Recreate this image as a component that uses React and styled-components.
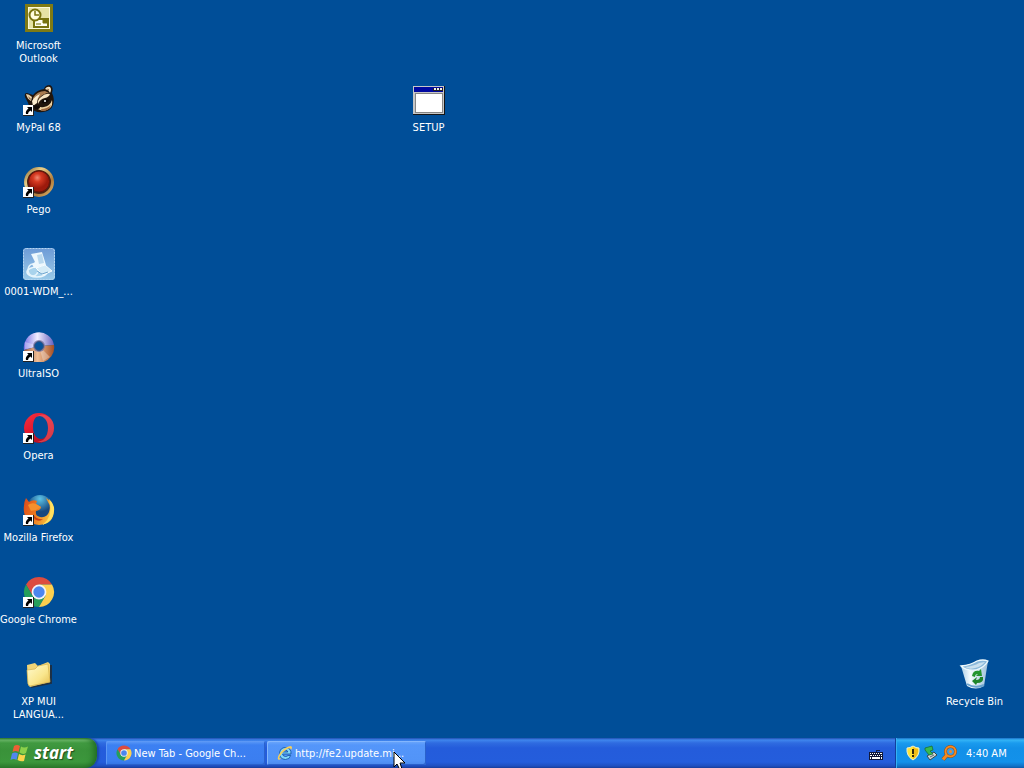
import React from 'react';
import styled, { createGlobalStyle } from 'styled-components';

const Global = createGlobalStyle`
  *, *::before, *::after { box-sizing: border-box; }
  html, body, #root { height: 100%; }
  body {
    margin: 0;
    overflow: hidden;
    background: #004e98;
    font-family: "DejaVu Sans Condensed", "DejaVu Sans", sans-serif;
    font-size: 11px;
    line-height: 13px;
    color: #fff;
  }
  button { font: inherit; color: inherit; border: 0; padding: 0; margin: 0; background: none; }
`;

const Screen = styled.div`
  height: 100%;
  display: flex;
  flex-direction: column;
`;

const Desktop = styled.main`
  position: relative;
  flex: 1;
  min-height: 0;
`;

const IconColumn = styled.div`
  display: grid;
  grid-auto-rows: 82px;
  width: 77px;
  padding-top: 2px;
`;

const Shortcut = styled.button`
  display: flex;
  flex-direction: column;
  align-items: center;
  align-self: start;
  width: 77px;
  white-space: nowrap;
`;

const Placed = styled.div`
  position: absolute;
  left: ${(p) => p.$left || 'auto'};
  right: ${(p) => p.$right || 'auto'};
  top: ${(p) => p.$top || 'auto'};
  bottom: ${(p) => p.$bottom || 'auto'};
`;

const IconBox = styled.span`
  position: relative;
  width: 32px;
  height: 32px;
  margin-bottom: 5px;
  svg { display: block; }
`;

const ArrowBadge = styled.svg`
  position: absolute;
  left: 0;
  bottom: 0;
`;

const Label = styled.span`
  text-align: center;
`;

const Taskbar = styled.footer`
  display: flex;
  height: 30px;
  flex: none;
  background: linear-gradient(#1f4fb0 0, #3f86ee 2px, #2f6be0 5px, #245cdb 10px, #245ddc 24px, #1f4fc0 28px, #173c99 30px);
`;

const StartButton = styled.button`
  display: flex;
  align-items: center;
  gap: 4px;
  width: 97px;
  padding: 0 0 1px 10px;
  border-radius: 0 10px 12px 0;
  background: linear-gradient(#2b7a2d 0, #6cb86a 2px, #419a41 5px, #3a923a 12px, #3c973c 24px, #2c7a2c 30px);
  box-shadow: inset -5px 0 6px -2px #1f6a22, 2px 0 2px #1c47a8;
  font-family: "Open Sans", "Noto Sans", sans-serif;
  font-size: 17px;
  line-height: 24px;
  font-weight: 700;
  font-style: italic;
  text-shadow: 1px 1px 1px #1d4a1d;
`;

const Tasks = styled.div`
  display: flex;
  flex: 1;
  min-width: 0;
  gap: 2px;
  padding: 3px 0 3px 9px;
`;

const Task = styled.button`
  display: flex;
  align-items: center;
  gap: 2px;
  width: 159px;
  padding: 0 10px;
  border-radius: 2px;
  white-space: nowrap;
  background: ${(p) => (p.$hover
    ? 'linear-gradient(#6fa9fb, #5496fa 4px, #5294f8 20px, #4a88ec)'
    : 'linear-gradient(#5f9cf8, #3c80f2 4px, #3b7ef0 20px, #3373e2)')};
  box-shadow: inset 1px 1px 0 ${(p) => (p.$hover ? '#83b6fd' : '#5c98f5')}, inset -1px -1px 0 #2a62cc;
  svg { flex: none; }
`;

const LanguageBar = styled.button`
  display: flex;
  align-items: center;
  justify-content: center;
  width: 39px;
  padding-top: 2px;
`;

const Tray = styled.div`
  display: flex;
  align-items: center;
  gap: 2px;
  width: 129px;
  padding-left: 9px;
  border-left: 1px solid #123f9c;
  background: linear-gradient(#1a70c8 0, #34b4f6 2px, #1a9bee 5px, #1290e8 10px, #1391ea 24px, #1172c8 28px, #0d5aa8 30px);
  box-shadow: inset 1px 0 0 #35b2f4;
  svg { flex: none; }
`;

const Clock = styled.time`
  margin-left: 7px;
  white-space: nowrap;
`;

const Pointer = styled.svg`
  position: fixed;
  left: 393px;
  top: 751px;
  pointer-events: none;
`;

const Outlook = () => (
  <svg width="32" height="32" viewBox="0 0 32 32">
    <rect x="2" y="2" width="28" height="28" fill="#7f7a14" />
    <rect x="5" y="5" width="22" height="22" fill="#fbf9dc" />
    <rect x="6" y="6" width="20" height="20" fill="#e6e2a4" />
    <rect x="11" y="17" width="14" height="8" fill="#fffef0" stroke="#77720e" strokeWidth="2" />
    <path d="M20 18h4v3h-4zM13 22h5" fill="#77720e" stroke="#77720e" />
    <circle cx="12" cy="13" r="5.500" fill="#fffde0" stroke="#77720e" strokeWidth="2" />
    <path d="M12 9v4h4" fill="none" stroke="#77720e" strokeWidth="1.500" />
  </svg>
);

const Raccoon = () => (
  <svg width="32" height="32" viewBox="0 0 32 32">
    <path d="M2 13Q1 9 4 9l6 2q4-5 11-6 1-4 6-4 4 2 2 8 3 6 1 12-2 6-10 7-8 1-13-4-2-6-5-11z" fill="#20150d" />
    <path d="M22 5q2-3 5-2 2 2 0 6-1-3-5-4z" fill="#f3e3c4" />
    <path d="M24 5q2-1 2 2z" fill="#7d4b27" />
    <path d="M3 10q3 0 6 3l-1 4q-4-2-5-7z" fill="#e9d3ac" />
    <path d="M5 12l3 3-1 1z" fill="#80502d" />
    <path d="M10 14q4-7 12-7l4 2q-5 0-10 5-3 4-6 5z" fill="#a87b50" />
    <path d="M9 17q3-5 8-7-3 5-3 9l-4 3z" fill="#faeccf" />
    <path d="M18 13q4-4 9-3-1 3-5 4-5 1-7 6-1-4 3-7z" fill="#f7e4c1" />
    <path d="M14 21q2 3 7 2 6-1 8-7 1 5-2 8-5 4-10 2-4-1-3-5z" fill="#eed2a1" />
    <path d="M18 25q6 0 10-4-2 6-9 6z" fill="#9c6840" />
    <path d="M19 17q4-3 7-1-2 4-7 3z" fill="#0e0906" />
    <circle cx="22" cy="17" r="1" fill="#fff" />
    <ellipse cx="14" cy="23" rx="3" ry="2" fill="#100b08" />
  </svg>
);

const Pego = () => (
  <svg width="32" height="32" viewBox="0 0 32 32">
    <defs>
      <radialGradient id="pego" cx=".42" cy=".32"><stop stopColor="#f08a72" /><stop offset=".4" stopColor="#d63a22" /><stop offset="1" stopColor="#9c1a0c" /></radialGradient>
      <linearGradient id="ring" x2="1" y2="1"><stop stopColor="#8d6b35" /><stop offset=".3" stopColor="#e6cd88" /><stop offset=".7" stopColor="#b07c3c" /><stop offset="1" stopColor="#e0b369" /></linearGradient>
    </defs>
    <circle cx="16" cy="16" r="13.500" fill="#4a2315" stroke="url(#ring)" strokeWidth="3" />
    <circle cx="16" cy="15.500" r="10.500" fill="url(#pego)" stroke="#6a140a" />
  </svg>
);

const Installer = () => (
  <svg width="32" height="32" viewBox="0 0 32 32">
    <defs><linearGradient id="inst" y2="1" x2="0"><stop stopColor="#6d9bd6" /><stop offset="1" stopColor="#9acbe9" /></linearGradient></defs>
    <rect width="32" height="32" rx="3" fill="url(#inst)" />
    <rect x=".5" y=".5" width="31" height="31" rx="3" fill="none" stroke="#b4d5f0" strokeDasharray="2 1" />
    <ellipse cx="14" cy="24" rx="10" ry="5" fill="#a9d3ec" stroke="#e9f6fc" strokeWidth="1.500" />
    <ellipse cx="10" cy="22" rx="5" ry="6" fill="none" stroke="#e3f3fb" strokeWidth="1.500" />
    <path d="M8 6l11-2 4 13-12 3-2-4 3-2z" fill="#eef8fd" />
    <path d="M14 7l5-1 2 9-5 1z" fill="#bad9ee" />
    <path d="M13 20l9-3 7 6-9 4z" fill="#d5ecf7" stroke="#f5fcff" />
    <path d="M14 23l5 3 6-2" stroke="#71a7cf" fill="none" />
  </svg>
);

const Disc = () => (
  <svg width="32" height="32" viewBox="0 0 32 32">
    <defs>
      <linearGradient id="discTop" x2="1"><stop stopColor="#7770e5" /><stop offset=".45" stopColor="#f2eeff" /><stop offset="1" stopColor="#6660bd" /></linearGradient>
      <linearGradient id="discLow" x2="1"><stop stopColor="#9f6047" /><stop offset=".45" stopColor="#f0bd94" /><stop offset="1" stopColor="#a34d23" /></linearGradient>
    </defs>
    <path d="M1 20A15 15 0 1 1 31 15L16 16z" fill="url(#discTop)" />
    <path d="M1 20A15 15 0 0 0 31 15L16 16z" fill="url(#discLow)" />
    <path d="M16 16L2 19 2 12zM16 16L20 31 27 27z" fill="#fff" opacity=".3" />
    <circle cx="16" cy="16" r="6" fill="#7672a0" opacity=".8" />
    <circle cx="16" cy="16" r="4.500" fill="#07539b" stroke="#40557e" />
  </svg>
);

const Opera = () => (
  <svg width="32" height="32" viewBox="0 0 32 32">
    <defs><linearGradient id="opera" x2=".6" y2="1"><stop stopColor="#f5303f" /><stop offset=".5" stopColor="#e21b2f" /><stop offset="1" stopColor="#b00d1f" /></linearGradient></defs>
    <path fillRule="evenodd" d="M16 1a15 15 0 1 0 0 30 15 15 0 1 0 0-30zM17 4c5 0 8 5 8 12s-3 11-7 11-8-4-8-12 3-11 7-11z" fill="url(#opera)" />
    <path d="M13 5q6-5 13 0 5 4 5 11t-5 11q-5 5-13 2 6 1 9-3 3-4 3-10T22 7q-4-5-9-2z" fill="#ef5b68" opacity=".6" />
  </svg>
);

const Firefox = () => (
  <svg width="32" height="32" viewBox="0 0 32 32">
    <defs>
      <radialGradient id="globe" cx=".5" cy=".15"><stop stopColor="#5cc4e8" /><stop offset="1" stopColor="#16487f" /></radialGradient>
      <linearGradient id="fox" x2="1" y2=".3"><stop stopColor="#d9481a" /><stop offset=".55" stopColor="#ef7d20" /><stop offset="1" stopColor="#f9c23e" /></linearGradient>
    </defs>
    <circle cx="17" cy="14" r="13" fill="url(#globe)" />
    <path d="M3 4l3 4q4-3 8-1l-1 3 5 3q0 3-5 4-1 5 4 6 7 1 9-5 2-6-1-10l-2-4q7 4 8 12 0 14-15 15Q3 30 1 18 0 9 3 4z" fill="url(#fox)" />
    <path d="M26 5q6 6 5 12-1 11-12 14 7-5 8-12 1-7-1-14z" fill="#ffe060" />
    <path d="M5 11q4-3 8-1l5 3-5 3-5 1z" fill="#f6902d" />
    <path d="M10 20q3 6 10 5-3 3-7 1-3-2-3-6z" fill="#c93f14" />
  </svg>
);

const Chrome = ({ size = 32 }) => (
  <svg width={size} height={size} viewBox="0 0 32 32">
    <path d="M3 8.500A15 15 0 0 1 29 8.500H16L9.500 19.700z" fill="#dc4c3f" />
    <path d="M3 8.500A15 15 0 0 0 16 31L22.500 19.700H9.500z" fill="#259e5b" />
    <path d="M29 8.500A15 15 0 0 1 16 31L22.500 19.700 16 8.500z" fill="#fdd04f" />
    <circle cx="16" cy="16" r="7.400" fill="#f4f4f4" />
    <circle cx="16" cy="16" r="5.700" fill="#4c86ee" />
  </svg>
);

const Folder = () => (
  <svg width="32" height="32" viewBox="0 0 32 32">
    <defs><linearGradient id="fold" x2="1" y2="1"><stop stopColor="#fffbd0" /><stop offset=".6" stopColor="#f9e68d" /><stop offset="1" stopColor="#e5bd4c" /></linearGradient></defs>
    <path d="M8 29l20-4V7" fill="none" stroke="#1d3045" strokeWidth="2" />
    <path d="M4 7l8-2 3 3 10-4 2 2v18L7 29l-2-2z" fill="#f0d476" />
    <path d="M4 12l8-1 3-3 10-2 2 18-20 4-2-2z" fill="url(#fold)" stroke="#d3b04e" strokeWidth=".7" />
  </svg>
);

const Setup = () => (
  <svg width="32" height="32" viewBox="0 0 32 32" shapeRendering="crispEdges">
    <path d="M0 2h32v29H0z" fill="#151515" />
    <path d="M0 2h31v28H0z" fill="#c6c6c6" />
    <path d="M2 9h28v20H2z" fill="#858585" />
    <path d="M3 10h26v18H3z" fill="#fff" />
    <path d="M1 3h29v5H1z" fill="#0008a0" />
    <path d="M20 4h10v3H20z" fill="#222" />
    <path d="M21 4h2v2h-2zM24 4h2v2h-2zM27 4h2v2h-2z" fill="#eee" />
  </svg>
);

const Bin = () => (
  <svg width="32" height="32" viewBox="0 0 32 32">
    <defs><linearGradient id="bin" x2="1"><stop stopColor="#a9cde6" /><stop offset=".35" stopColor="#f4fbfe" /><stop offset="1" stopColor="#9dbfd8" /></linearGradient></defs>
    <path d="M2 8q10-1 16-5 6-2 11 0l-4 25q-8 5-17 0z" fill="url(#bin)" />
    <path d="M2 8q10-1 16-5 6-2 11 0-3 6-12 9Q7 13 2 8z" fill="#8ab8da" stroke="#eef9fd" strokeWidth="1.300" />
    <path d="M6 9q9-1 14-4l6-1q-4 5-10 6-6 2-10-1z" fill="#c9e0ef" />
    <path d="M8 26q8 5 17 1" fill="none" stroke="#6ba4cf" strokeWidth="2" />
    <path d="M13 18q1-6 7-5l2-2 1 7h-6l2-2q-3 0-3 3z" fill="#25952e" />
    <path d="M24 19q1 6-6 6l-1 2-4-4 5-4-1 3q4 0 4-3z" fill="#1f8529" />
  </svg>
);

const WindowsFlag = () => (
  <svg width="20" height="20" viewBox="0 0 20 20">
    <path d="M4 3q3-2 6 0L8.500 9q-3-2-6 0z" fill="#ed6035" />
    <path d="M11 3.500q3 2 7 0L16 10q-3 2-6.500-.5z" fill="#8bd04b" />
    <path d="M2 10.500q3-2 6 0L6.500 17q-3-2-6 0z" fill="#5287ee" />
    <path d="M9 11q3 2 6.500.500L14 18q-3 1-6.500-1z" fill="#fbd34b" />
  </svg>
);

const Explorer = () => (
  <svg width="16" height="16" viewBox="0 0 16 16">
    <path d="M14 9H5.500Q6 11.500 8.500 11.500q1.500 0 2.500-1h2.700Q12.500 14.500 8.500 14.500q-6-.5-6-6Q3 2.500 8.500 2.500 14.500 3 14 9zM5.500 7h5.300Q10.500 5 8.200 5 6 5 5.500 7z" fill="#7fd6fb" stroke="#0f4f9e" strokeWidth=".8" />
    <path d="M2 15Q-1 14 3 8 9 1 14 1q2 1 0 4 0-3-4-1Q5 7 2.500 12q-1 2 2 1.500z" fill="#f6cf5a" />
  </svg>
);

const Keyboard = () => (
  <svg width="14" height="13" viewBox="0 0 14 13" shapeRendering="crispEdges">
    <path d="M7 4V2h4" fill="none" stroke="#14214a" />
    <rect y="4" width="14" height="8" fill="#10183a" />
    <path d="M1 5h12v1H1zM1 7h12v1H1zM1 9h12v2H1z" fill="#fff" />
    <path d="M2 5h1v1H2zM4 5h1v1H4zM6 5h1v1H6zM8 5h1v1H8zM10 5h1v1h-1zM3 7h1v1H3zM5 7h1v1H5zM7 7h1v1H7zM9 7h1v1H9zM11 7h1v1h-1zM2 9h1v2H2zM11 9h1v2h-1z" fill="#10183a" />
  </svg>
);

const Shield = () => (
  <svg width="16" height="16" viewBox="0 0 16 16">
    <path d="M8 1q3 2 6 2 1 8-6 12Q1 11 2 3q3 0 6-2z" fill="#ffe337" stroke="#e8edd0" />
    <path d="M8 2q3 2 5 2 1 6-5 10z" fill="#f0bd16" />
    <path d="M8 4v5M8 10v2" stroke="#332b0b" strokeWidth="2" />
  </svg>
);

const SafeRemove = () => (
  <svg width="16" height="16" viewBox="0 0 16 16">
    <path d="M4 11l7-4 3 3-7 5z" fill="#ced6d5" stroke="#354850" />
    <path d="M7 12l4-2" stroke="#5c696c" />
    <path d="M2 3l7-2 1 4-3 1 3 3-4 1-4-5z" fill="#38b951" stroke="#17692c" strokeWidth=".7" />
  </svg>
);

const Magnifier = () => (
  <svg width="16" height="16" viewBox="0 0 16 16">
    <path d="M6 10l-4 4.500" stroke="#8f4a13" strokeWidth="4" />
    <circle cx="9.500" cy="6.500" r="5" fill="#3e9ae0" stroke="#8f4a13" strokeWidth="3" />
    <circle cx="9.500" cy="6.500" r="5" fill="none" stroke="#f58a20" strokeWidth="2" />
    <path d="M6 10l-4 4.500" stroke="#f58a20" strokeWidth="3" />
    <circle cx="9.500" cy="6.500" r="1.500" fill="#f58a20" />
  </svg>
);

function DesktopIcon({ art, lines, linked }) {
  return (
    <Shortcut type="button">
      <IconBox>
        {art}
        {linked && (
          <ArrowBadge width="11" height="11" viewBox="0 0 11 11">
            <path d="M0 0h11v11H0z" fill="#222" />
            <path d="M0 0h10v10H0z" fill="#fff" />
            <path d="M4 2h5v5L7.500 5.500Q5 6.500 5 9H3Q2 6 5.500 3.500z" fill="#000" />
          </ArrowBadge>
        )}
      </IconBox>
      {lines.map((line) => <Label key={line}>{line}</Label>)}
    </Shortcut>
  );
}

const shortcuts = [
  { art: <Outlook />, lines: ['Microsoft', 'Outlook'] },
  { art: <Raccoon />, lines: ['MyPal 68'], linked: true },
  { art: <Pego />, lines: ['Pego'], linked: true },
  { art: <Installer />, lines: ['0001-WDM_...'] },
  { art: <Disc />, lines: ['UltraISO'], linked: true },
  { art: <Opera />, lines: ['Opera'], linked: true },
  { art: <Firefox />, lines: ['Mozilla Firefox'], linked: true },
  { art: <Chrome />, lines: ['Google Chrome'], linked: true },
  { art: <Folder />, lines: ['XP MUI', 'LANGUA...'] },
];

export default function App() {
  return (
    <Screen>
      <Global />
      <Desktop>
        <IconColumn>
          {shortcuts.map((s) => <DesktopIcon key={s.lines[0]} {...s} />)}
        </IconColumn>
        <Placed $left="390px" $top="84px">
          <DesktopIcon art={<Setup />} lines={['SETUP']} />
        </Placed>
        <Placed $right="11px" $bottom="30px">
          <DesktopIcon art={<Bin />} lines={['Recycle Bin']} />
        </Placed>
      </Desktop>
      <Taskbar>
        <StartButton type="button"><WindowsFlag />start</StartButton>
        <Tasks>
          <Task type="button"><Chrome size={16} />New Tab - Google Ch...</Task>
          <Task type="button" $hover><Explorer />http://fe2.update.mi...</Task>
        </Tasks>
        <LanguageBar type="button" aria-label="Language bar"><Keyboard /></LanguageBar>
        <Tray>
          <Shield />
          <SafeRemove />
          <Magnifier />
          <Clock>4:40 AM</Clock>
        </Tray>
      </Taskbar>
      <Pointer width="13" height="20" viewBox="0 0 13 20">
        <path d="M1 1v15l3-3 3 6 2-1-2-6h5z" fill="#fff" stroke="#000" />
      </Pointer>
    </Screen>
  );
}
